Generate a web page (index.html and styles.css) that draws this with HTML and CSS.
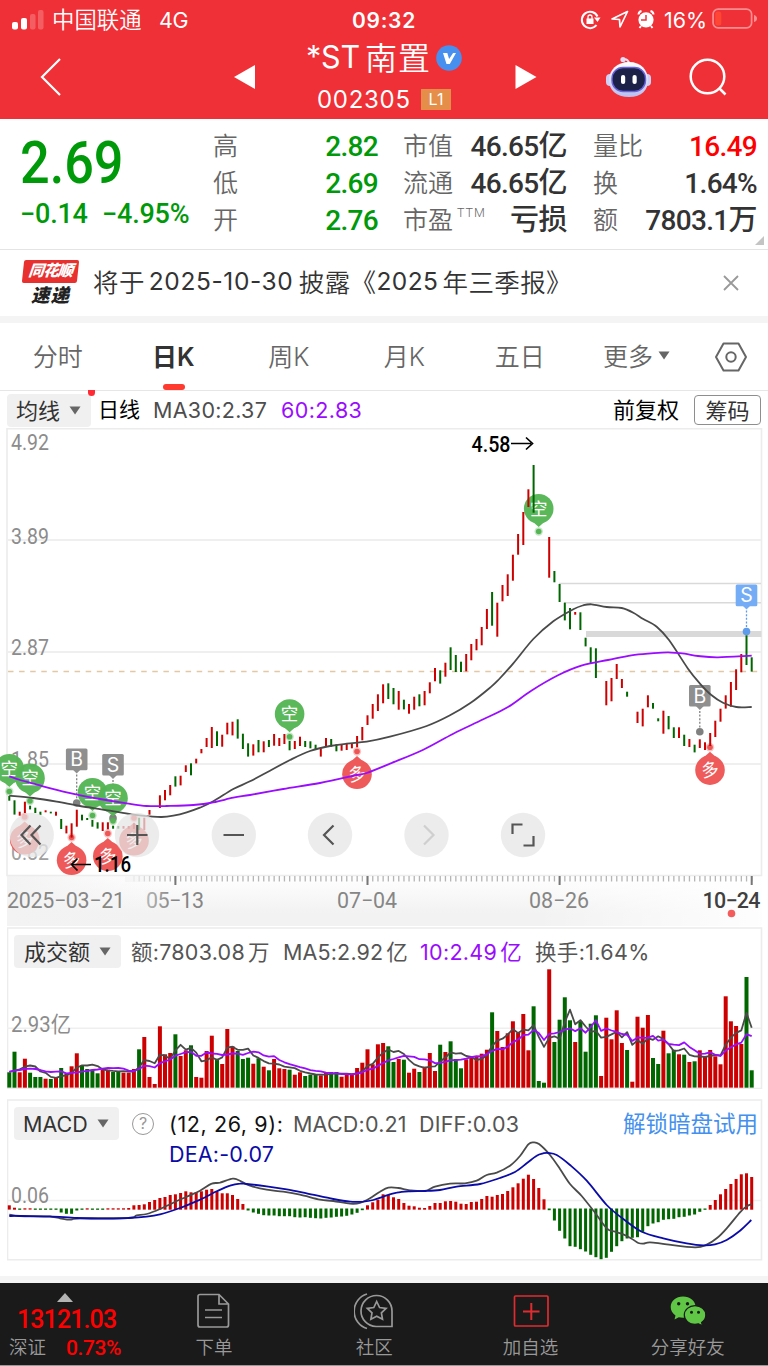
FILE: index.html
```html
<!DOCTYPE html>
<html lang="zh-CN">
<head>
<meta charset="utf-8">
<title>*ST南置 002305</title>
<link rel="stylesheet" href="styles.css">
</head>
<body>
<div class="app">
  <header class="top">
    <div class="status">
      <svg class="signal" width="34" height="22" viewBox="0 0 34 22"><g fill="#fff"><rect x="0" y="13" width="6" height="7.500" rx="2"/><rect x="9" y="9" width="6" height="11.500" rx="2"/><g opacity=".22"><rect x="18" y="5" width="5.500" height="15.500" rx="2"/><rect x="26" y="1" width="5.500" height="19.500" rx="2"/></g></g></svg>
      <span class="carrier">中国联通</span><span class="net">4G</span>
      <span class="clock">09:32</span>
      <svg class="sys" width="76" height="24" viewBox="580 8 76 24" fill="none" stroke="#fff" stroke-width="2"><path d="M597.500 16.500a8.200 8.200 0 1 0-1 8.500"/><path d="M594 17.500h6.500l-3 4.500z" fill="#fff" stroke="none"/><rect x="586.500" y="18.500" width="7" height="5.500" fill="#fff" stroke="none"/><path d="M588 19v-2a2 2 0 0 1 4 0v2" stroke-width="1.300"/><path d="M627.500 11.500l-15.500 7.500 7.500.500.500 7.500z" stroke-width="1.700" stroke-linejoin="round"/><circle cx="646" cy="19.800" r="7.600" fill="#fff" stroke="none"/><path d="M646 15v5h-5" stroke="#f03037" stroke-width="1.500"/><path d="M638.500 14.500a4 4 0 0 1 3-3.500M650.500 11a4 4 0 0 1 3 3.500M641 26l-1.500 2M651 26l1.500 2"/></svg>
      <span class="pct">16%</span>
      <svg class="batt" width="46" height="22" viewBox="0 0 46 22"><rect x="1.100" y="1.100" width="38.500" height="18.800" rx="5" fill="none" stroke="#f98e91" stroke-width="1.700"/><rect x="3.300" y="3.500" width="6" height="14" rx="2.500" fill="#ff4634"/><path d="M42 7v7q3-1 3-3.500t-3-3.500z" fill="#f98e91"/></svg>
    </div>
    <nav class="nav">
      <svg class="c1" width="24" height="40" viewBox="0 0 24 40" fill="none" stroke="#fff" stroke-width="2.200"><path d="M21 2L3 20l18 18"/></svg>
      <svg class="c3" width="22" height="26" viewBox="0 0 22 26"><path d="M0 13L21 1v24z" fill="#fff"/></svg>
      <div class="title">
        <div class="name"><span class="st">*ST</span><span class="cn">南置</span><svg width="26" height="26" viewBox="0 0 26 26"><circle cx="13" cy="13" r="12.800" fill="#4790ef"/><path d="M7 8h4.300l1.800 6 4-6H20l-6.200 11h-3.300z" fill="#fff"/></svg></div>
        <div class="code"><span>002305</span><b>L1</b></div>
      </div>
      <svg class="c5" width="22" height="26" viewBox="0 0 22 26"><path d="M21.500 13L.500 1v24z" fill="#fff"/></svg>
      <svg class="c6" width="46" height="44" viewBox="605 55 46 44"><defs><linearGradient id="rb" x1="0" y1="0" x2="0" y2="1"><stop offset="0" stop-color="#fff"/><stop offset="1" stop-color="#b9bff0"/></linearGradient></defs><path d="M623 59.500q6-1 6 5" fill="none" stroke="#e9e3f7" stroke-width="2"/><circle cx="623" cy="59.500" r="2.600" fill="#dfdcf6"/><rect x="606" y="74" width="8" height="12" rx="4" fill="#cfd0f5"/><rect x="643" y="74" width="8" height="12" rx="4" fill="#cfd0f5"/><path d="M629 62c12 0 19 8 19 18s-6 17-19 17-20-7-20-17 8-18 20-18z" fill="url(#rb)"/><rect x="612" y="67.500" width="33.500" height="24" rx="11" fill="#1c2148" stroke="#6a63dc" stroke-width="1.400"/><rect x="621" y="75" width="4.200" height="9" rx="2" fill="#fff"/><rect x="632.500" y="75" width="4.200" height="9" rx="2" fill="#fff"/></svg>
      <svg class="c7" width="40" height="40" viewBox="0 0 40 40" fill="none" stroke="#fff" stroke-width="2.500"><circle cx="19.500" cy="19.500" r="16.800"/><path d="M31 31l6.500 6.500"/></svg>
    </nav>
  </header>

  <section class="quote">
    <div class="price"><div class="big"><span>2.69</span></div><div class="chg"><span>−0.14</span><span>−4.95%</span></div></div>
    <dl class="g1"><dt>高</dt><dd>2.82</dd><dt>低</dt><dd>2.69</dd><dt>开</dt><dd>2.76</dd></dl>
    <dl class="g2"><dt>市值</dt><dd>46.65<i>亿</i></dd><dt>流通</dt><dd>46.65<i>亿</i></dd><dt>市盈<sup>TTM</sup></dt><dd><i>亏损</i></dd></dl>
    <dl class="g3"><dt>量比</dt><dd class="up">16.49</dd><dt>换</dt><dd>1.64%</dd><dt>额</dt><dd>7803.1<i>万</i></dd></dl>
    <svg class="corner" width="9" height="9" viewBox="0 0 9 9"><path d="M9 0v9H0z" fill="#c4c4c4"/></svg>
  </section>

  <section class="news">
    <div class="badge"><div class="b1"><span>同花顺</span></div><div class="b2">速递</div></div>
    <p><span>将于</span><span class="n1">2025-10-30</span><span>披露《</span><span class="n2">2025</span><span>年三季报》</span></p>
    <svg width="16" height="16" viewBox="0 0 16 16" stroke="#999" stroke-width="1.800"><path d="M1 1l14 14M15 1L1 15"/></svg>
  </section>

  <nav class="tabs">
    <span>分时</span><span class="on">日K</span><span>周K</span><span>月K</span><span>五日</span>
    <span class="more">更多<svg width="12" height="9" viewBox="0 0 12 9"><path d="M.500.500h11L6 8.500z" fill="#666"/></svg></span>
    <svg width="34" height="30" viewBox="0 0 34 30" fill="none" stroke="#666" stroke-width="2"><path d="M9.500 1.500h15L32 15l-7.500 13.500h-15L2 15z" stroke-linejoin="round"/><circle cx="17" cy="15" r="4.700"/></svg>
  </nav>

  <section class="ma">
    <button class="dd w1"><span>均线</span><svg width="12" height="9" viewBox="0 0 12 9"><path d="M.500.500h11L6 8.500z" fill="#666"/></svg></button><i class="dot"></i>
    <span class="k">日线</span><span class="m30">MA30:2.37</span><span class="m60">60:2.83</span>
    <span class="fq">前复权</span><button class="chip"><span>筹码</span></button>
  </section>

  <svg id="price" width="768" height="499" viewBox="0 428 768 499"></svg>

  <section class="panel vol">
    <svg id="vol" width="756" height="162" viewBox="7 927 756 162"></svg>
    <div class="info">
      <button class="dd w2"><span>成交额</span><svg width="12" height="9" viewBox="0 0 12 9"><path d="M.500.500h11L6 8.500z" fill="#666"/></svg></button>
      <span class="v1">额:7803.08<em>万</em></span><span class="v2">MA5:2.92<em>亿</em></span><span class="v3">10:2.49<em>亿</em></span><span class="v4">换手:1.64%</span>
    </div>
  </section>

  <section class="panel mac">
    <svg id="macd" width="756" height="162" viewBox="7 1099 756 162"></svg>
    <div class="info">
      <button class="dd w3">MACD<svg width="12" height="9" viewBox="0 0 12 9"><path d="M.500.500h11L6 8.500z" fill="#666"/></svg></button>
      <span class="q">?</span>
      <div class="vals"><span class="p0">(12, 26, 9):</span><span class="p1">MACD:0.21</span><span class="p2">DIFF:0.03</span><span class="p3">DEA:-0.07</span></div>
      <a>解锁暗盘试用</a>
    </div>
  </section>

  <footer class="foot">
    <div class="idx"><svg width="16" height="9" viewBox="0 0 16 9"><path d="M8 0l8 9H0z" fill="#b4b4b4"/></svg><div class="iv">13121.03</div><div class="ip"><span>深证</span><b>0.73%</b></div></div>
    <div class="it"><svg width="36" height="38" viewBox="196 1292 36 38" fill="none" stroke="#999" stroke-width="1.700"><path d="M200 1294.500h19l9.500 9.500v21q0 2-2 2h-26.500q-2 0-2-2v-28.500q0-2 2-2zM219 1295v9h9.500M205 1310h17M205 1317.500h17"/></svg><span>下单</span></div>
    <div class="it sq"><svg width="40" height="38" viewBox="353 1292 40 38" fill="none" stroke="#999" stroke-width="1.700"><path d="M366 1294a18 18 0 0 0 0 34.500"/><path d="M391 1326.500h-16a15.500 15.500 0 1 1 16-15.500z"/><path d="M375.700 1301.500l2.900 6 6.500.900-4.700 4.500 1.100 6.400-5.800-3-5.800 3 1.100-6.400-4.700-4.500 6.500-.900z"/></svg><span>社区</span></div>
    <div class="it"><svg width="36" height="38" viewBox="513 1292 36 38" fill="none" stroke="#e02c30" stroke-width="1.700"><rect x="514.500" y="1296" width="33.500" height="30" rx="1"/><path d="M531.300 1303v17M523 1311.500h16.500" stroke-width="2"/></svg><span>加自选</span></div>
    <div class="it fr"><svg width="38" height="38" viewBox="669 1292 38 38"><path d="M683 1296.500c-7 0-12.300 4.600-12.300 10.500 0 3.600 1.800 6.400 4.800 8.400l-1 4 4.300-2.200c1.300.300 2.700.500 4.200.500 7 0 12.500-4.800 12.500-10.700s-5.500-10.500-12.500-10.500z" fill="#5fc646"/><path d="M695 1305.700c-6 0-10.700 4.100-10.700 9.300s4.700 9.300 10.700 9.300c1.300 0 2.400-.200 3.500-.500l4 2-.900-3.300c2.600-1.700 4.200-4.400 4.200-7.500 0-5.200-4.800-9.300-10.800-9.300z" fill="#5fc646" stroke="#1a1a1a" stroke-width="1.200"/><g fill="#1a1a1a"><circle cx="678.700" cy="1303.700" r="1.700"/><circle cx="687.500" cy="1303.700" r="1.700"/><circle cx="691.500" cy="1312.200" r="1.500"/><circle cx="698.500" cy="1312.200" r="1.500"/></g></svg><span>分享好友</span></div>
  </footer>
</div>
<script src="charts.js"></script>
</body>
</html>
```

FILE: styles.css
```css
* { box-sizing: border-box; }
body { margin: 0; background: #fff; }
body, button { font-family: Inter, "Noto Sans CJK SC", sans-serif; }
svg { display: block; flex: none; }
i, em { font-style: normal; }
button { border: 0; padding: 0; color: #333; display: flex; align-items: center; }
button span { margin-bottom: 3px; }
.app { width: 768px; height: 1366px; overflow: hidden; display: flex; flex-direction: column; background: #fff; white-space: nowrap; }
.app > * { flex: none; }

.top { height: 119px; background: #f03037; color: #fff; }
.status { height: 40px; display: flex; align-items: center; padding-left: 12px; font-size: 21.5px; }
.carrier { width: 107px; margin: 0 0 4px 6px; font-size: 22.4px; font-weight: 350; }
.net { width: 193px; letter-spacing: -.3px; }
.clock { width: 228px; font-weight: 600; font-size: 21px; letter-spacing: .7px; }
.pct { width: 45px; margin-left: 8px; font-size: 21.5px; letter-spacing: 0; }
.batt { margin-left: 3px; margin-top: -2px; }
.nav { height: 79px; display: grid; grid-template-columns: 102px 102px 82px 199px 82px 122px 38px; align-items: start; justify-items: center; }
.c1 { margin-top: 17px; grid-column: 1; }
.c3 { margin-top: 24px; grid-column: 3; }
.c5 { margin-top: 24px; grid-column: 5; }
.c6 { margin-top: 15px; grid-column: 6; }
.c7 { margin-top: 17px; }
.title { grid-column: 4; grid-row: 1; padding-right: 3px; }
.name { height: 40px; display: flex; align-items: center; margin-top: -2px; font-size: 30.5px; }
.name .st { width: 59px; letter-spacing: -.2px; margin-bottom: 4px; }
.name .cn { width: 71px; letter-spacing: 1px; font-weight: 350; font-size: 32px; margin-bottom: 5px; }
.code { display: flex; align-items: center; height: 36px; margin: 3px 0 0 11px; font-size: 24px; }
.code span { width: 104px; letter-spacing: .7px; }
.code b { width: 30px; height: 21px; background: #e48e49; font-weight: 400; font-size: 16px; text-align: center; line-height: 21px; }

.quote { height: 131px; display: flex; border-bottom: 1px solid #e4e4e4; position: relative; font-family: Roboto, "Noto Sans CJK SC", sans-serif; font-weight: 500; }
.price { width: 213px; padding-left: 20px; color: #00990a; }
.big { height: 76px; font-size: 60px; line-height: 88px; }
.big span { display: inline-block; transform: scaleX(.87); transform-origin: left; }
.chg { font-size: 27px; line-height: 38px; display: flex; letter-spacing: -.2px; }
.chg span:first-child { width: 82px; }
.quote dl { margin-top: 0; margin-bottom: 0; padding-top: 9px; display: grid; grid-template-rows: repeat(3, 37px); line-height: 37px; }
dt { color: #666; font-size: 25px; font-weight: 350; }
dd { margin: 0; font-size: 28px; text-align: right; color: #333; letter-spacing: -.7px; }
dd i { font-size: 29px; font-weight: 500; letter-spacing: -.5px; }
.g1 { width: 165px; grid-template-columns: 60px 105px; }
.g1 dd { color: #00990a; }
.g2 { width: 164px; margin-left: 25px; grid-template-columns: 50px 114px; }
.g3 { width: 164px; margin-left: 26px; grid-template-columns: 52px 112px; }
dd.up { color: #f00; }
.g2 sup { font-size: 12.500px; letter-spacing: 1px; margin-left: 4px; vertical-align: 12px; line-height: 0; }
.corner { position: absolute; right: 4px; bottom: 4px; }

.news { height: 66px; display: flex; align-items: center; padding-left: 23px; }
.badge { width: 55px; height: 46px; text-align: center; font-weight: 900; font-style: italic; }
.b1 { height: 23px; background: #e8302f; color: #fff; border-radius: 2px; transform: skewX(-6deg); font-size: 15.500px; line-height: 22px; letter-spacing: -.8px; }
.b2 { font-size: 18.500px; line-height: 24px; color: #222; letter-spacing: 1px; }
.news p { margin: 0 0 4px 15px; width: 628px; display: flex; font-size: 25.5px; color: #333; font-weight: 350; letter-spacing: .4px; }
.n1 { width: 150px; margin-left: 4px; letter-spacing: .6px; font-size: 24.500px; line-height: 39px; font-weight: 400; }
.n2 { width: 66px; letter-spacing: .4px; font-size: 24.500px; line-height: 39px; font-weight: 400; }
.news > svg { margin-left: 2px; }

.tabs { height: 75px; border-top: 7px solid #f4f4f4; border-bottom: 1px solid #e6e6e6; display: flex; align-items: center; font-size: 25px; color: #666; font-weight: 350; }
.tabs span { width: 115.5px; text-align: center; margin-bottom: 3px; }
.tabs span.on { font-weight: 600; color: #333; height: 67px; line-height: 68px; position: relative; margin-bottom: 0; }
.tabs .on::after { content: ""; position: absolute; left: 47px; bottom: 0; width: 22px; height: 6px; border-radius: 3px; background: #ff3b30; }
.tabs .more { display: flex; align-items: center; justify-content: center; gap: 5px; width: 118px; }
.tabs > svg { margin-left: 18px; }

.ma { height: 37px; display: flex; align-items: center; padding: 1px 0 0 7px; font-size: 21.5px; color: #4d4d4d; }
.dd { background: #f0f0f0; border-radius: 4px; height: 33px; font-size: 22px; gap: 9px; }
.w1 { width: 84px; padding-left: 9px; }
.dot { width: 7px; height: 6px; margin: -35px -3px 0 -3px; background: #ff2a33; border-radius: 0 0 4px 4px; position: relative; }
.k { color: #000; font-size: 21px; width: 55px; margin: 0 0 4px 6px; }
.m30 { width: 128px; letter-spacing: .3px; }
.m60 { width: 332px; color: #9a0cff; letter-spacing: .4px; }
.fq { color: #000; width: 81px; font-size: 22px; margin-bottom: 4px; }
.chip { width: 67px; height: 30px; border: 1.500px solid #8e8e8e; border-radius: 4px; background: #fff; font-size: 22px; justify-content: center; }

.panel { width: 756px; margin-left: 7px; display: grid; height: 162px; }
.panel > * { grid-area: 1 / 1; }
.mac { margin-top: 10px; }
.info { display: flex; padding: 8px 0 0 7px; font-size: 21.5px; line-height: 34px; color: #555; }
.w2 { width: 107px; padding-left: 10px; }
.v1 { margin-left: 10px; width: 152px; letter-spacing: .25px; }
.v2 { width: 137px; letter-spacing: .15px; }
.v3 { width: 115px; color: #9a0cff; letter-spacing: .3px; }
.v4 { letter-spacing: .35px; }
.info em { margin-left: 3px; }
.w3 { width: 105px; padding-left: 9px; margin-top: 0; font-size: 21.5px; }
.q { width: 22px; height: 22px; border: 1.500px solid #999; border-radius: 50%; font-size: 16px; line-height: 19px; text-align: center; color: #999; margin: 6px 15px 0 13px; }
.vals { width: 454px; display: grid; grid-template-columns: 124px 126px 1fr; grid-template-rows: 34px 26px; letter-spacing: .2px; }
.p0 { color: #111; letter-spacing: .6px; }
.p3 { color: #0b0ba8; line-height: 26px; }
.info a { color: #4490ee; font-size: 22.5px; }

.foot { height: 90px; margin-top: 15px; border-top: 7px solid #f4f4f4; background: #1a1a1a; display: flex; border-bottom: 1px solid #999; }
.idx { width: 135px; font-family: Roboto, "Noto Sans CJK SC", sans-serif; padding-top: 10px; color: #f00; font-weight: 500; }
.idx svg { margin-left: 57px; }
.iv { font-size: 25px; line-height: 30px; padding-left: 17px; margin-top: 3px; letter-spacing: -.9px; }
.ip { display: flex; font-size: 18.500px; line-height: 28px; padding-left: 9px; margin-top: -1px; }
.ip span { color: #999; width: 57px; font-weight: 350; }
.ip b { font-size: 21px; font-weight: 500; letter-spacing: -.4px; }
.it { width: 158.500px; display: flex; flex-direction: column; align-items: center; color: #999; font-size: 18.500px; padding-top: 9px; }
.it span { line-height: 28px; margin-top: 3px; font-weight: 350; }
.sq { padding-left: 4px; }
.fr { padding-right: 2px; }
```

FILE: charts.js
```js
const RED = '#cc0000', GREEN = '#006600', GRAY = '#4a4a4a', PURPLE = '#9a0cff', NAVY = '#0b0ba8';
const X = i => 9.3 + 5.1915 * i;
const F = n => n.toFixed(1);

// Candle directions, one letter per trading day.
const DIR = ('ggrrgggrgr grrrggggrr ggrrrgrrrr rrgrrgrrrr grrrgggrgr grrrgrrggg rrggrrrrrr rrrggrgrrg rrrgrgggrr rrrgrrrrrr rgggrggggr ggggrrrrrg rrrrggrggr grgrrrrrrr rrgg').replace(/ /g, '');

// High/low spans: base offset, first day, then pairs in thirds of a pixel.
const SPANS = [
  [690, 0, '318-332 331-374 365-377 335-369 347-358 353-369 365-375 361-367 365-370 365-377 387-417 407-430 400-443 359-410 374-391 384-390 390-410 397-416 397-423 397-418 407-416 408-416 408-416 408-416 400-417 383-420 383-420 360-374 0-0 316-354 300-331 285-316 259-290 257-286 226-246 220-256 206-220 177-190 144-171 111-174 124-168 134-170 98-133 95-136 88-146 131-177 160-200'],
  [640, 47, '313-347 300-337 304-337 300-321 282-317 294-318 282-312 303-331 303-327 290-318 303-321 304-325 314-330 325-350 294-318 297-320 313-334 312-332 310-330 310-325 288-322 261-301 226-255 192-236 163-213 133-190 130-177 144-193 153-209 179-208 192-221 170-209 163-199 153-196 127-160 84-124 91-131 68-110'],
  [430, 85, '652-720 675-726 695-726 672-724 642-691 627-661 591-646 537-597 486-587 518-620 465-514 433-498 374-452 312-374 246-345 178-231 105-248 0-0 0-0 321-443 423-457 462-516 518-571 534-598 546-554 547-600 623-649 652-699 655-744'],
  [640, 114, '0-0 123-196 114-184 72-117 117-144 155-170 0-0 215-249 206-259 166-202 189-206 235-244 212-281 228-268 262-294 262-294 284-318 297-321 314-337 298-324 307-330 279-318 242-291 206-245 166-206 126-200 88-150 42-97 -14:75 52-95']
];
const VOL = '442 380 442 401 443 456 456 461 462 458 429 445 424 385 421 432 434 445 435 434 441 440 443 443 432 373 336 456 477 304 388 384 328 393 376 361 456 458 378 332 401 417 312 364 378 402 398 416 400 425 436 402 430 432 434 449 442 453 449 449 451 442 441 441 455 450 449 429 413 373 418 358 354 364 411 402 404 443 431 441 425 384 438 359 381 349 402 430 403 394 396 386 374 262 318 366 325 289 324 267 376 244 468 473 133 351 284 217 286 351 289 380 296 271 453 278 343 256 354 375 470 275 308 270 399 417 317 385 374 388 389 411 409 376 394 375 394 418 214 289 303 357 156 436'.split(' ').map(Number);
const HIST = '331 338 344 340 340 344 344 344 344 344 352 356 356 346 344 340 344 344 344 340 340 340 340 339 331 330 328 321 315 309 306 300 298 294 289 292 292 289 284 282 290 295 295 300 312 327 346 352 356 360 361 361 363 363 363 366 367 366 368 369 370 368 367 365 364 362 358 353 345 331 322 314 298 300 307 312 324 332 334 338 339 333 324 324 319 318 320 326 327 321 320 312 303 305 300 297 288 277 265 251 239 252 279 313 345 376 407 430 453 455 462 469 479 486 492 488 470 453 438 430 428 426 410 393 385 381 374 372 371 366 365 361 358 350 344 330 315 298 282 267 252 238 235 246'.split(' ').map(Number);

const pts = (s, ox, oy) => s.split(' ').map(p => { const [x, y] = p.split(',').map(Number); return [ox + x / 3, oy + y / 3]; });
function curve(p) {
  let d = `M${F(p[0][0])} ${F(p[0][1])}`;
  for (let i = 0; i < p.length - 1; i++) {
    const a = p[i - 1] || p[i], b = p[i], c = p[i + 1], e = p[i + 2] || c;
    d += `C${F(b[0] + (c[0] - a[0]) / 6)} ${F(b[1] + (c[1] - a[1]) / 6)} ${F(c[0] - (e[0] - b[0]) / 6)} ${F(c[1] - (e[1] - b[1]) / 6)} ${F(c[0])} ${F(c[1])}`;
  }
  return d;
}
const path = (d, col) => `<path d="${d}" fill="none" stroke="${col}" stroke-width="1.8" stroke-linejoin="round"/>`;
const line = (x1, y1, x2, y2, col, w, more = '') => `<line x1="${x1}" y1="${y1}" x2="${x2}" y2="${y2}" stroke="${col}" stroke-width="${w}" ${more}/>`;
const rect = (x, y, w, h, col, more = '') => `<rect x="${x}" y="${y}" width="${w}" height="${h}" fill="${col}" ${more}/>`;
const label = (x, y, w, t, col = '#8c8c8c', size = 22, weight = 400) => `<text x="${x}" y="${y}" textLength="${w}" lengthAdjust="${size > 21.5 ? 'spacingAndGlyphs' : 'spacing'}" fill="${col}" font-size="${size}" font-weight="${weight}" font-family="Roboto, 'Noto Sans CJK SC', sans-serif">${t}</text>`;

function pin(x, y, up) {
  const col = up ? '#ee5555' : '#55b555', s = up ? 1 : -1;
  const cy = y + s * 22.8;
  return `<circle cx="${x}" cy="${y}" r="4.2" fill="${col}" opacity=".35"/><circle cx="${x}" cy="${y}" r="2.8" fill="${col}"/>` +
    `<g fill="${col}" opacity=".97"><circle cx="${x}" cy="${cy}" r="14.8"/><path d="M${x - 7} ${cy - s * 12}L${x} ${y + s * 4.5}L${x + 7} ${cy - s * 12}z"/></g>` +
    `<text x="${x}" y="${cy + 6}" text-anchor="middle" font-size="17.5" fill="#fff" font-family="Noto Sans CJK SC" ${up ? `transform="rotate(-10 ${x} ${cy})"` : ''}>${up ? '多' : '空'}</text>`;
}
function flag(x, top, dotY, t, col, dot) {
  return rect(x - 10.8, top, 21.6, 21.6, col, 'rx="1.5"') + `<path d="M${x - 4} ${top + 21}h8l-4 4z" fill="${col}"/>` +
    line(x, top + 26, x, dotY - 4, dot, 1.3, 'stroke-dasharray="2 1.6"') + `<circle cx="${x}" cy="${dotY}" r="3.8" fill="${dot}"/>` +
    `<text x="${x}" y="${top + 17.7}" text-anchor="middle" font-size="19.5" fill="#fff" font-family="Inter">${t}</text>`;
}

function drawPrice() {
  let s = '<defs><linearGradient id="ax" x1="0" y1="0" x2="0" y2="1"><stop offset="0" stop-color="#fff"/><stop offset=".75" stop-color="#f2f2f2"/></linearGradient>' +
    '<linearGradient id="axr"><stop offset="0" stop-color="#f3f3f3"/><stop offset=".2" stop-color="#f3f3f3" stop-opacity="0"/><stop offset=".7" stop-color="#fff" stop-opacity="0"/><stop offset="1" stop-color="#fff" stop-opacity=".9"/></linearGradient>' +
    '<linearGradient id="fade"><stop offset="0" stop-color="#f5f5f5"/><stop offset="1" stop-color="#f5f5f5" stop-opacity="0"/></linearGradient></defs>';
  s += rect(7, 875, 755, 51, 'url(#ax)') + rect(7, 875, 755, 51, 'url(#axr)');
  s += `<path d="M7 875.5V428.8H761.5V875.5z" fill="none" stroke="#ececec" stroke-width="1.6"/>`;
  for (const y of [540, 652, 764]) s += line(7, y, 761, y, '#efefef', 1.8);
  s += label(11, 450, 38, '4.92') + label(11, 544, 38, '3.89') + label(11, 655, 38, '2.87') + label(11, 767, 38, '1.85') + label(11, 860, 38, '0.82', '#a0a0a0');
  s += line(559, 583.5, 761, 583.5, '#d9d9d9', 1.6) + line(564, 602.7, 761, 602.7, '#d9d9d9', 1.6) + rect(586, 631, 175.5, 6, '#d9d9d9');
  s += line(8, 671.5, 761, 671.5, '#e2c8a4', 1.4, 'stroke-dasharray="5.5 5.6"');
  s += pin(9.3, 791.5, 0) + pin(30, 801, 0) + flag(76.7, 748.6, 803, 'B', '#8f8f8f', '#808080') + flag(113, 754, 818, 'S', '#8f8f8f', '#808080');
  s += pin(92.5, 815.5, 0) + pin(113, 821, 0) + pin(289.6, 736.8, 0) + pin(538.7, 531.5, 0);
  s += pin(24.7, 817, 1) + pin(71.6, 837.5, 1) + pin(107.8, 833.5, 1) + pin(134, 818, 1) + pin(357, 751.5, 1) + pin(710, 747.3, 1);
  s += flag(699.8, 685, 731.7, 'B', '#8f8f8f', '#808080') + flag(746.5, 584.6, 631.5, 'S', '#74adf5', '#5d9cec');
  for (const [base, first, str] of SPANS) str.split(' ').forEach((p, k) => {
    const [a, b] = (p.includes(':') ? p.split(':') : p.split('-')).map(Number);
    if (b) s += rect(F(X(first + k) - 1), F(base + a / 3), 2, F((b - a) / 3), DIR[first + k] === 'r' ? RED : GREEN);
  });
  const ma30 = [...pts('28,317 100,324 170,335 240,348 330,362 400,374 450,379 485,381 520,377 560,367 600,353 640,334 700,297', 0, 690), ...pts('0,424 60,392 120,360 180,333 240,318 290,311 350,305 420,290 530,258 600,226 660,190 720,143', 250, 640), ...pts('175,750 220,700 280,627 340,574 400,538 430,526 455,523 500,531 545,534 580,548 610,567 650,590', 440, 430), ...pts('483,0 540,86 575,130 610,165 645,188 685,201 731,201', 508, 640)];
  const ma60 = [...pts('28,259 60,270 100,281 200,307 300,327 380,340 440,348 500,348 580,345 640,337 700,323', 0, 690), ...pts('0,465 100,447 210,429 320,405 350,399 420,371 520,329 610,281 700,238', 250, 640), ...pts('0,201 70,152 150,106 220,77 300,60 370,46 430,40 480,37 530,41 570,48 630,52 731,47', 508, 640)];
  s += path(curve(ma30), GRAY) + path(curve(ma60), PURPLE);
  s += label(471.5, 452, 39, '4.58', '#000', 22, 500) + `<path d="M511 443.500h20M526 437.500l6.500 6-6.500 6" fill="none" stroke="#000" stroke-width="1.700"/>`;

  for (const x of [31.7, 137, 233.8, 330, 426.5, 523]) s += `<circle cx="${x}" cy="835" r="22.2" fill="#e5e5e5" opacity=".74"/>`;
  s += `<g fill="none" stroke="#555" stroke-width="2.2"><path d="M30.500 825.500l-9 9.500 9 9.500M40.500 825.500l-9 9.500 9 9.500M127 835h20.500M137.300 825v20M223.500 835h20.500M333.500 825.500l-9.500 9.500 9.500 9.500M512.500 834v-9.500h10M533.500 836v9.500h-10"/><path d="M424 825.500l9.500 9.500-9.500 9.500" stroke="#cfcfcf"/></g>`;
  s += label(94, 872, 37, '1.16', '#000', 22, 500) + `<path d="M91 864.500H72M77.500 858.500l-6 6 6 6" fill="none" stroke="#000" stroke-width="1.700"/>`;

  for (let i = 24; i < 144; i++) s += rect(F(X(i) - .6), 876, 1.3, 5.5, '#b5b5b5');
  for (const i of [32, 69, 106, 143]) s += rect(F(X(i) - 1), 876, 2, 9, '#777');
  s += rect(125, 876, 45, 6, 'url(#fade)');
  const axis = '#868686';
  s += label(7, 908, 118, '2025−03−21', axis, 21.4) + label(146, 908, 58, '05−13', axis, 21.4) + rect(145, 890, 28, 20, 'url(#fade)', 'opacity=".45"') + label(337, 908, 60, '07−04', axis, 21.4) + label(529, 908, 60, '08−26', axis, 21.4) + label(702.5, 908, 58, '10−24', '#404040', 21.4, 500);
  s += '<circle cx="731.5" cy="913.500" r="3.800" fill="#f45b5b"/>';
  document.getElementById('price').innerHTML = s;
}

function average(n, head) {
  return VOL.map((_, i) => {
    const m = i < head.length ? head[i] : VOL.slice(i - n + 1, i + 1).reduce((a, b) => a + b) / n;
    return `${i ? 'L' : 'M'}${F(X(i))} ${F(925 + m / 3)}`;
  }).join('');
}
function drawVolume() {
  let s = `<path d="M7.500 1088.500V928H761.500V1088.500z" fill="none" stroke="#ececec" stroke-width="1.6"/>` + line(7, 1028.3, 761, 1028.3, '#efefef', 1.6);
  s += label(11, 1031.5, 60, '2.93亿');
  VOL.forEach((v, i) => s += rect(F(X(i) - 2), F(925 + v / 3), 4, F((488 - v) / 3), DIR[i] === 'r' ? RED : GREEN));
  s += path(average(5, [441, 437, 433, 425]), GRAY) + path(average(10, [440, 437, 435, 432, 431, 432, 435, 439, 441]), PURPLE);
  document.getElementById('vol').innerHTML = s;
}
function drawMacd() {
  let s = `<path d="M7.500 1259.700V1100H761.500V1259.700z" fill="none" stroke="#ececec" stroke-width="1.600"/>` + line(7, 1200.5, 761, 1200.5, '#efefef', 1.6);
  s += label(11, 1203, 38, '0.06');
  HIST.forEach((v, i) => { const up = v < 342; s += rect(F(X(i) - 1.5), F(up ? 1095 + v / 3 : 1208.5), 3, F(up ? (344 - v) / 3 : (v - 340) / 3), up ? RED : GREEN); });
  s += path(curve(pts('28,359 60,363 150,365 180,370 210,374 240,370 385,369 410,361 440,357 480,342 520,323 560,305 600,287 635,266 660,263 697,251 715,255 750,272 800,284 850,290 900,299 960,314 1000,318 1050,326 1080,324 1110,310 1140,290 1165,278 1195,279 1230,286 1275,288 1305,275 1350,266 1395,265 1430,257 1460,240 1490,233 1530,212 1560,183 1585,148 1600,142 1617,147 1650,180 1680,222 1710,267 1745,303 1785,353 1820,400 1845,410 1870,418 1895,431 1915,444 1930,446 1950,442 2000,448 2085,457 2120,449 2150,430 2180,400 2220,352 2240,334 2255,327', 0, 1095)), GRAY);
  s += path(curve(pts('28,363 60,363 150,364 230,369 310,371 385,369 440,365 480,358 540,339 600,314 650,289 690,272 720,266 740,267 800,274 860,283 920,295 1000,312 1050,320 1090,320 1120,315 1152,304 1190,293 1230,289 1275,288 1320,285 1370,275 1440,267 1500,249 1545,231 1580,205 1610,182 1630,175 1645,174 1670,180 1710,210 1760,257 1820,330 1870,372 1925,410 1990,430 2060,445 2110,451 2145,448 2180,435 2220,407 2254,375', 0, 1095)), NAVY);
  document.getElementById('macd').innerHTML = s;
}
drawPrice();
drawVolume();
drawMacd();
```
